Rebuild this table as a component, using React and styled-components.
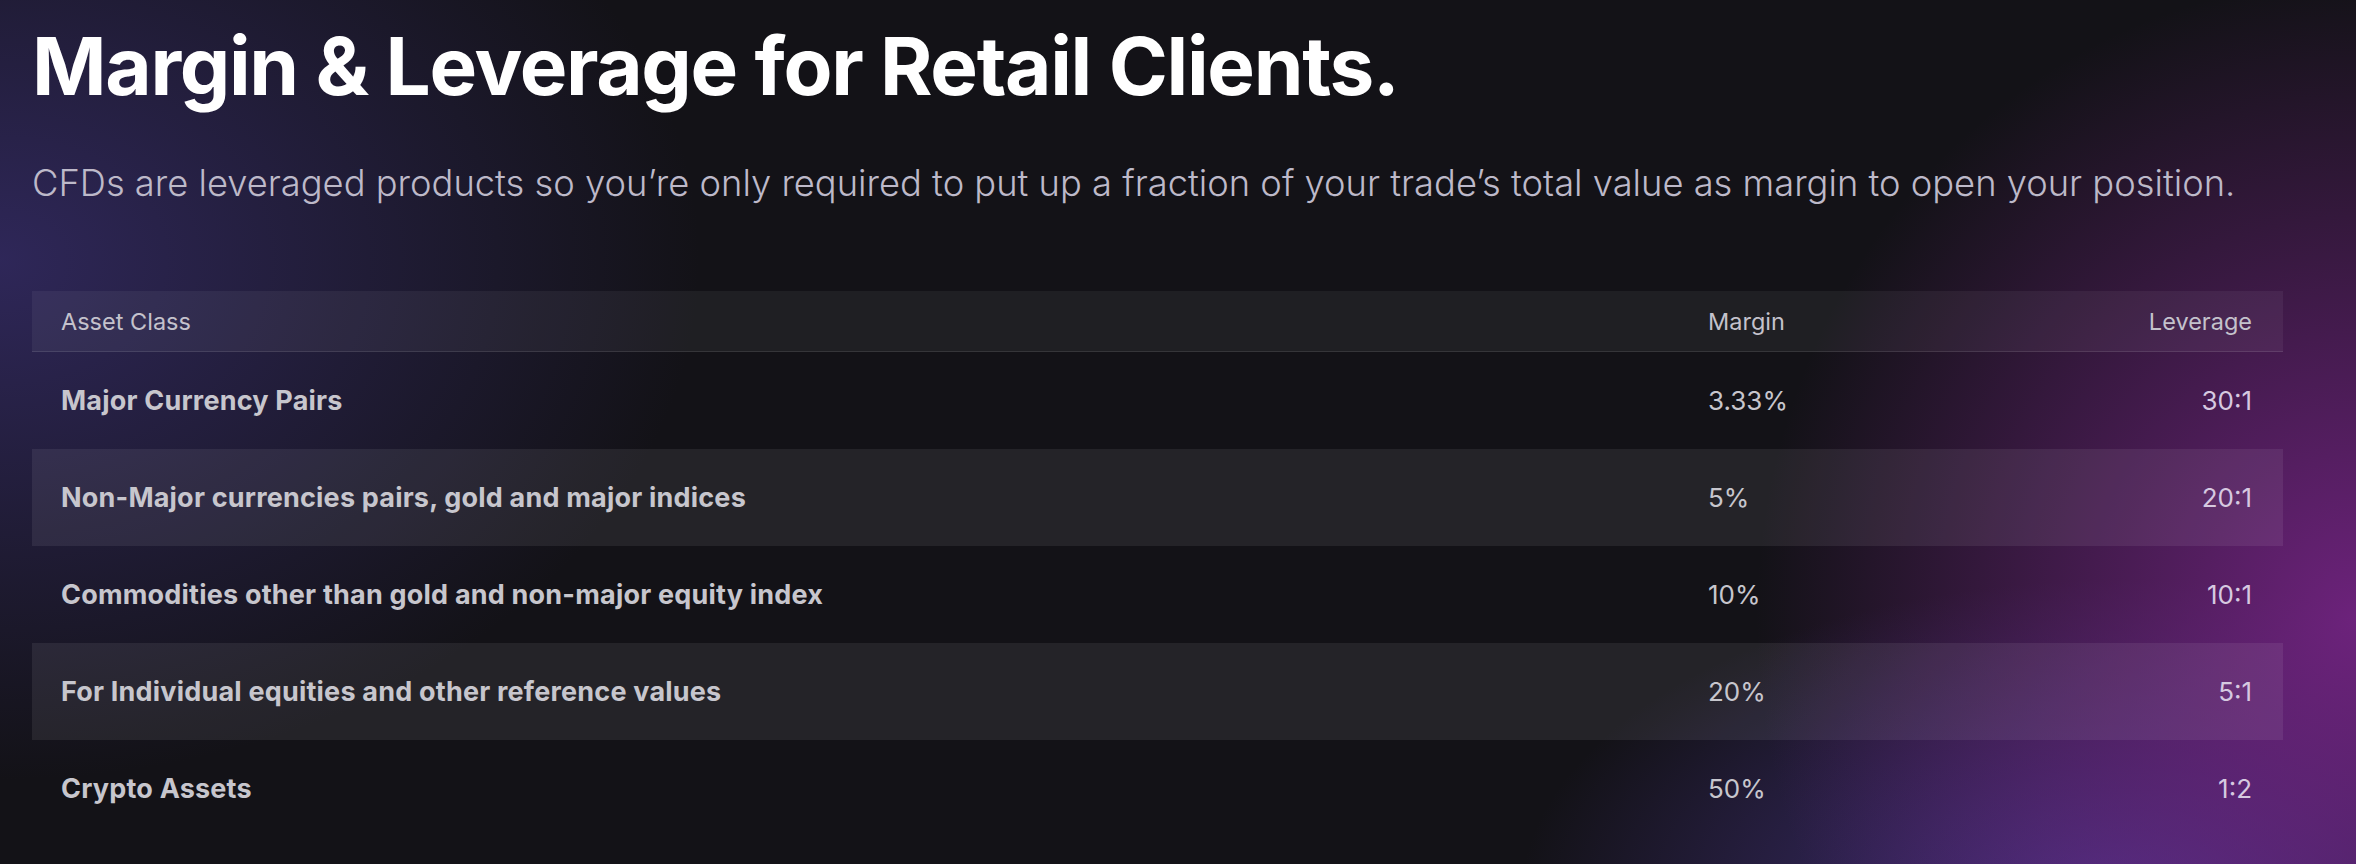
import React from 'react';
import styled, { createGlobalStyle } from 'styled-components';

const GlobalStyle = createGlobalStyle`
  html, body {
    margin: 0;
    padding: 0;
    background: #131217;
  }
  body {
    font-family: Inter, "Noto Sans", sans-serif;
  }
`;

const rows = [
  { asset: 'Major Currency Pairs', margin: '3.33%', leverage: '30:1' },
  { asset: 'Non-Major currencies pairs, gold and major indices', margin: '5%', leverage: '20:1' },
  { asset: 'Commodities other than gold and non-major equity index', margin: '10%', leverage: '10:1' },
  { asset: 'For Individual equities and other reference values', margin: '20%', leverage: '5:1' },
  { asset: 'Crypto Assets', margin: '50%', leverage: '1:2' },
];

function App() {
  return (
    <>
      <GlobalStyle />
      <Section>
        <Title>Margin &amp; Leverage for Retail Clients.</Title>
        <Lead>
          CFDs are leveraged products so you’re only required to put up a fraction of your trade’s total value as margin to open your position.
        </Lead>
        <Table>
          <HeadRow>
            <HeadCell>Asset Class</HeadCell>
            <HeadCell>Margin</HeadCell>
            <HeadCell align="right">Leverage</HeadCell>
          </HeadRow>
          {rows.map((r, i) => (
            <Row key={r.asset} striped={i % 2 === 1}>
              <AssetCell>{r.asset}</AssetCell>
              <ValueCell>{r.margin}</ValueCell>
              <ValueCell align="right" accent>{r.leverage}</ValueCell>
            </Row>
          ))}
        </Table>
      </Section>
    </>
  );
}

const Section = styled.section`
  box-sizing: border-box;
  width: 100%;
  height: 864px;
  overflow: hidden;
  padding: 18px 73px 0 32px;
  background:
    radial-gradient(ellipse 600px 640px at 2356px 620px, rgba(118, 36, 134, 0.9), rgba(118, 36, 134, 0) 100%),
    radial-gradient(ellipse 600px 320px at 2120px 900px, rgba(70, 50, 132, 0.95), rgba(70, 50, 132, 0) 100%),
    radial-gradient(ellipse 700px 520px at 0px 260px, rgba(48, 40, 92, 0.95), rgba(48, 40, 92, 0) 100%),
    #131217;
`;

const Title = styled.h1`
  margin: 0;
  font-family: Inter, "Noto Sans", sans-serif;
  font-weight: 700;
  font-size: 80px;
  line-height: 96px;
  letter-spacing: -1.3px;
  color: #ffffff;
`;

const Lead = styled.p`
  margin: 47px 0 0;
  font-family: Inter, "Noto Sans", sans-serif;
  font-weight: 300;
  font-size: 36.3px;
  line-height: 44px;
  color: #bdb9c9;
`;

const Table = styled.div`
  margin-top: 86px;
  display: flex;
  flex-direction: column;
`;

const HeadRow = styled.div`
  display: grid;
  grid-template-columns: 1fr 270px 274px;
  align-items: center;
  height: 60px;
  padding: 0 31px 0 29px;
  background: rgba(255, 255, 255, 0.055);
  border-bottom: 1px solid rgba(255, 255, 255, 0.1);
`;

const HeadCell = styled.div`
  font-size: 23.5px;
  font-weight: 400;
  color: #c4c2cc;
  text-align: ${p => p.align || 'left'};
`;

const Row = styled.div`
  display: grid;
  grid-template-columns: 1fr 270px 274px;
  align-items: center;
  height: 97px;
  padding: 0 31px 0 29px;
  background: ${p => (p.striped ? 'rgba(255, 255, 255, 0.075)' : 'transparent')};
`;

const AssetCell = styled.div`
  font-size: 27px;
  font-weight: 700;
  letter-spacing: 0.2px;
  color: #c7c6cd;
`;

const ValueCell = styled.div`
  font-size: 26px;
  font-weight: 400;
  color: ${p => (p.accent ? '#d6c9e0' : '#c7c6cd')};
  text-align: ${p => p.align || 'left'};
`;

export default App;
